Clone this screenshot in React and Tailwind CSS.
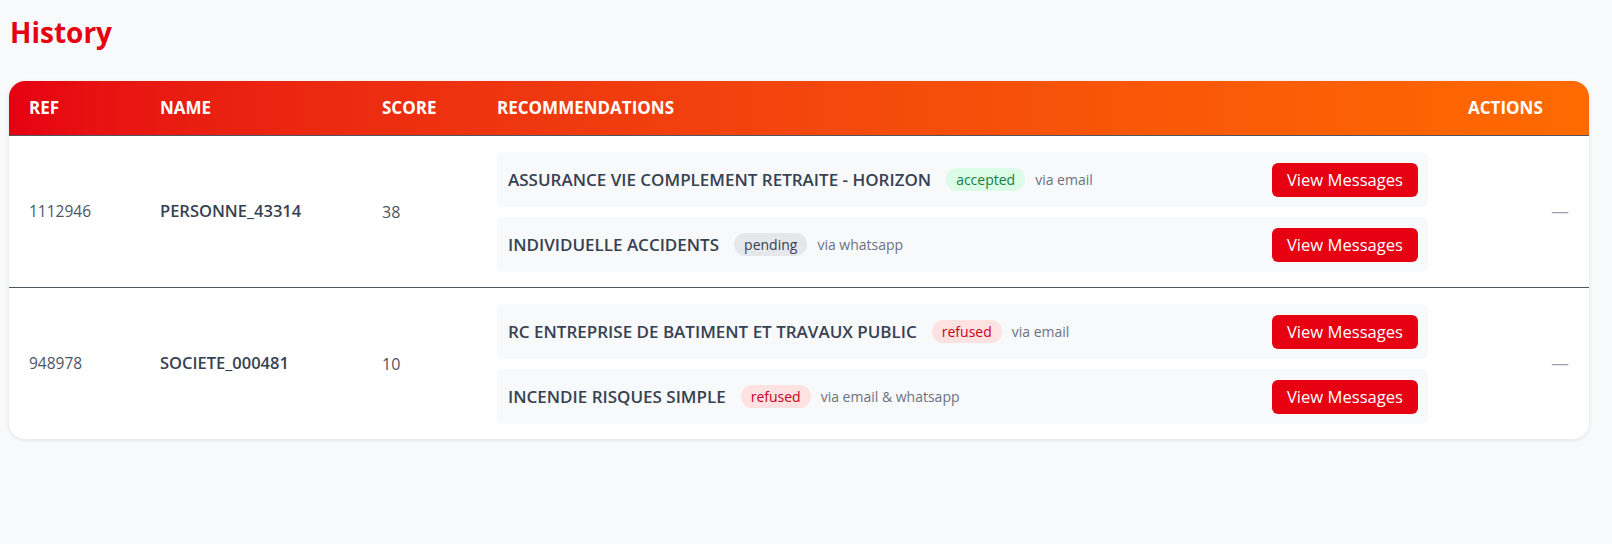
const rows = [
  {
    ref: '1112946',
    name: 'PERSONNE_43314',
    score: 38,
    recs: [
      { title: 'ASSURANCE VIE COMPLEMENT RETRAITE - HORIZON', status: 'accepted', via: 'via email' },
      { title: 'INDIVIDUELLE ACCIDENTS', status: 'pending', via: 'via whatsapp' },
    ],
  },
  {
    ref: '948978',
    name: 'SOCIETE_000481',
    score: 10,
    recs: [
      { title: 'RC ENTREPRISE DE BATIMENT ET TRAVAUX PUBLIC', status: 'refused', via: 'via email' },
      { title: 'INCENDIE RISQUES SIMPLE', status: 'refused', via: 'via email & whatsapp' },
    ],
  },
];

const badgeStyles = {
  accepted: 'bg-[#dcfce7] text-[#15803d]',
  pending: 'bg-[#e5e7eb] text-[#374151]',
  refused: 'bg-[#fee2e2] text-[#c8001a]',
};

const StatusBadge = ({ status }) => (
  <span className={`h-[23px] px-[10px] rounded-full text-[14px] leading-[23px] ${badgeStyles[status]}`}>
    {status}
  </span>
);

const RecommendationItem = ({ rec }) => (
  <div className="h-[55px] flex items-center justify-between bg-[#f8f9fb] rounded-md pl-[11px] pr-[10px]">
    <div className="flex items-center">
      <span className="text-[17px] font-semibold text-[#374151] mr-[15px]">{rec.title}</span>
      <StatusBadge status={rec.status} />
      <span className="text-[14px] text-[#6b7280] ml-[10px]">{rec.via}</span>
    </div>
    <button className="h-[34px] px-[15px] rounded-md bg-[#e60012] text-white text-[16.6px] leading-[34px]">
      View Messages
    </button>
  </div>
);

export default function App() {
  return (
    <div
      className="min-h-screen bg-[#f8f9fb] pt-[14px] pl-[9px]"
      style={{ fontFamily: '"Open Sans", "Noto Sans", sans-serif' }}
    >
      <h1 className="ml-px text-[28px] leading-[36px] font-bold text-[#e60012] mb-[31px]">History</h1>

      <div className="w-[1580px] bg-white rounded-2xl shadow-[0_1px_4px_rgba(0,0,0,0.1)] overflow-hidden">
        <div className="h-[55px] flex items-center bg-gradient-to-r from-[#e60012] to-[#ff6a00] border-b border-[#4b5563] text-white font-bold text-[17px]">
          <div className="w-[131px] pl-5">REF</div>
          <div className="w-[222px] pl-5">NAME</div>
          <div className="w-[115px] pl-5">SCORE</div>
          <div className="w-[971px] pl-5">RECOMMENDATIONS</div>
          <div className="w-[141px] pl-5">ACTIONS</div>
        </div>

        {rows.map((row, i) => (
          <div
            key={row.ref}
            className={`flex items-center ${i < rows.length - 1 ? 'border-b border-[#4b5563]' : ''}`}
          >
            <div className="w-[131px] pl-5 text-[15.5px] text-[#4b5563]">{row.ref}</div>
            <div className="w-[222px] pl-5 text-[16.5px] font-semibold text-[#374151]">{row.name}</div>
            <div className="w-[115px] pl-5 text-[16px] text-[#4b5563]">{row.score}</div>
            <div className="w-[971px] px-5 pt-4 pb-[15px] flex flex-col gap-[10px]">
              {row.recs.map((rec) => (
                <RecommendationItem key={rec.title} rec={rec} />
              ))}
            </div>
            <div className="w-[141px] pr-5 text-right text-[#9ca3af] text-[18px]">—</div>
          </div>
        ))}
      </div>
    </div>
  );
}
